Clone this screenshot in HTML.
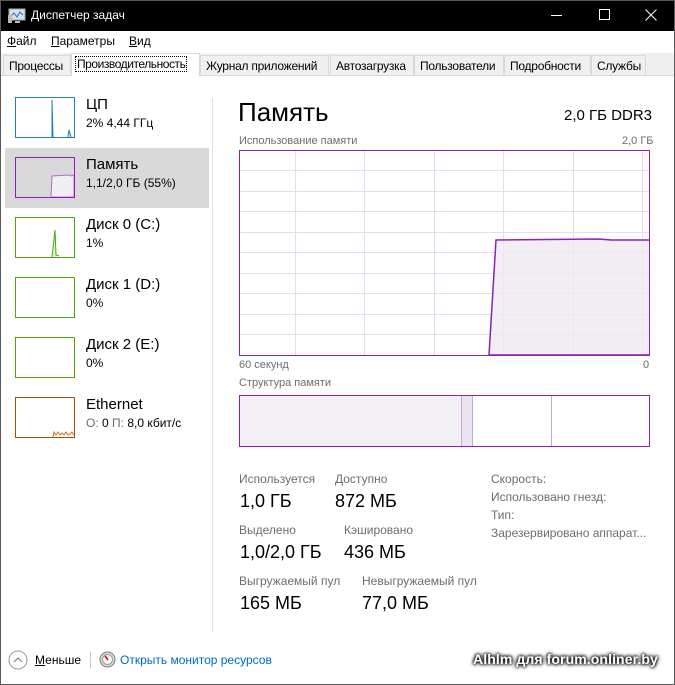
<!DOCTYPE html>
<html><head><meta charset="utf-8"><style>
*{margin:0;padding:0;box-sizing:border-box}
body{width:675px;height:685px;overflow:hidden;background:#fff;font-family:"Liberation Sans",sans-serif;font-size:12px;color:#000;position:relative}
.a{position:absolute;white-space:nowrap}
.title{left:0;top:0;width:675px;height:31px;background:#000;color:#fff}
.menu{top:34px;font-size:12px}
.tabs{left:0;top:53px;width:675px;height:23px;background:#f0f0f0;border-bottom:1px solid #d9d9d9}
.tab{position:absolute;top:2px;height:20px;background:#f0f0f0;border:1px solid #d9d9d9;border-bottom:none;font-size:12px;padding:3px 0 0 5px;letter-spacing:-0.25px;overflow:hidden}
.thumb{position:absolute;left:15px;width:60px;height:41px;border:1px solid}
.ln{font-size:15px}
.sm{font-size:12px}
.g{color:#6d6d6d;font-size:11px}
.lab{color:#6d6d6d;font-size:12px}
.val{font-size:18px}
</style></head><body>
<div class="a" style="left:0;top:0;width:675px;height:685px;border:1px solid #5a5a5a;z-index:5;pointer-events:none"></div>
<div class="a title">
<svg class="a" style="left:8px;top:8px" width="18" height="16" viewBox="0 0 18 16"><rect x="1" y="1" width="16" height="11" fill="#cfe3f3" stroke="#aaa"/><path d="M3 8 L6 5 L9 9 L12 4 L15 7" stroke="#2a6cb0" fill="none"/><rect x="0" y="7" width="4" height="8" fill="#bbb"/><rect x="7" y="13" width="5" height="2" fill="#bbb"/></svg>
<div class="a" style="left:31px;top:8px;font-size:12px">Диспетчер задач</div>
<div class="a" style="left:551px;top:15px;width:11px;height:1px;background:#fff"></div>
<div class="a" style="left:599px;top:9px;width:11px;height:11px;border:1px solid #fff"></div>
<svg class="a" style="left:645px;top:9px" width="12" height="12"><path d="M0.5 0.5L11.5 11.5M11.5 0.5L0.5 11.5" stroke="#fff"/></svg>
</div>
<div class="a menu" style="left:7px"><u>Ф</u>айл</div>
<div class="a menu" style="left:51px"><u>П</u>араметры</div>
<div class="a menu" style="left:129px"><u>В</u>ид</div>
<div class="a tabs">
<div class="tab" style="left:3px;width:68px">Процессы</div>
<div class="tab" style="left:71px;width:129px;top:0;height:23px;background:#fff;padding-top:3px;padding-left:4px;letter-spacing:-0.45px"><span style="outline:1px dotted #000;padding:0 1px">Производительность</span></div>
<div class="tab" style="left:200px;width:129px">Журнал приложений</div>
<div class="tab" style="left:330px;width:84px">Автозагрузка</div>
<div class="tab" style="left:414px;width:90px">Пользователи</div>
<div class="tab" style="left:504px;width:87px">Подробности</div>
<div class="tab" style="left:591px;width:55px">Службы</div>
</div>

<div class="a" style="left:5px;top:148px;width:204px;height:60px;background:#d9d9d9"></div>
<div class="a" style="left:212px;top:98px;width:1px;height:534px;background:#e3e3e3"></div>

<div class="thumb" style="top:97px;border-color:#1e7ebe"><svg width="58" height="39"><path d="M36 39 L36 2 L37 39 M52 39 L53 32 L55 39" stroke="#1e7ebe" fill="#d6e8f5"/></svg></div>
<div class="a ln" style="left:86px;top:96px">ЦП</div>
<div class="a sm" style="left:86px;top:116px">2% 4,44 ГГц</div>

<div class="thumb" style="top:157px;border-color:#8b21b8"><svg width="58" height="39"><path d="M35 39 L36 18 L53 17 L55 18 L58 17 L58 39Z" fill="#f1eef4" stroke="#b36ad0"/></svg></div>
<div class="a ln" style="left:86px;top:156px">Память</div>
<div class="a sm" style="left:86px;top:176px">1,1/2,0 ГБ (55%)</div>

<div class="thumb" style="top:217px;border-color:#4da60c"><svg width="58" height="39"><path d="M36 39 L39 12 L40 37 L43 38" stroke="#4da60c" fill="#e0f0d4"/></svg></div>
<div class="a ln" style="left:86px;top:216px">Диск 0 (C:)</div>
<div class="a sm" style="left:86px;top:236px">1%</div>

<div class="thumb" style="top:277px;border-color:#4da60c"></div>
<div class="a ln" style="left:86px;top:276px">Диск 1 (D:)</div>
<div class="a sm" style="left:86px;top:296px">0%</div>

<div class="thumb" style="top:337px;border-color:#4da60c"></div>
<div class="a ln" style="left:86px;top:336px">Диск 2 (E:)</div>
<div class="a sm" style="left:86px;top:356px">0%</div>

<div class="thumb" style="top:397px;border-color:#a74f01"><svg width="58" height="39"><path d="M37 39 L38 34 L40 37 L42 34 L44 37 L46 35 L48 37 L50 34 L52 37 L54 36 L56 34 L58 37" stroke="#c27030" fill="none"/></svg></div>
<div class="a ln" style="left:86px;top:396px">Ethernet</div>
<div class="a sm" style="left:86px;top:416px"><span style="color:#6d6d6d">О:</span> 0 <span style="color:#6d6d6d">П:</span> 8,0 кбит/с</div>

<div class="a" style="left:238px;top:97px;font-size:26px">Память</div>
<div class="a" style="left:564px;top:107px;font-size:15px">2,0 ГБ DDR3</div>
<div class="a g" style="left:239px;top:135px">Использование памяти</div>
<div class="a g" style="left:622px;top:135px">2,0 ГБ</div>
<svg class="a" style="left:239px;top:150px" width="411" height="206">
<g stroke="#ead9f0" stroke-width="1">
<path d="M0 20.5H411M0 41.5H411M0 61.5H411M0 82.5H411M0 102.5H411M0 123.5H411M0 143.5H411M0 164.5H411M0 184.5H411"/>
<path d="M56.5 0V206M125.5 0V206M195.5 0V206M264.5 0V206M334.5 0V206M403.5 0V206"/>
</g>
<path d="M250 205 L257 90 L360 89 L372 90 L411 90 L411 205Z" fill="#eeebf0" fill-opacity="0.8" stroke="#8b21b8" stroke-width="1.5"/>
<rect x="0.5" y="0.5" width="410" height="205" fill="none" stroke="#8b21b8"/>
</svg>
<div class="a g" style="left:239px;top:359px">60 секунд</div>
<div class="a g" style="left:643px;top:359px">0</div>
<div class="a g" style="left:239px;top:377px">Структура памяти</div>
<div class="a" style="left:239px;top:395px;width:411px;height:52px;border:1px solid #8b21b8;background:#fff">
<div class="a" style="left:0;top:0;width:222px;height:50px;background:#f2f0f4;border-right:1px solid #c9a6d8"></div>
<div class="a" style="left:222px;top:0;width:11px;height:50px;background:#ece3f1;border-right:1px solid #c9a6d8"></div>
<div class="a" style="left:311px;top:0;width:1px;height:50px;background:#c9a6d8"></div>
</div>

<div class="a lab" style="left:239px;top:472px">Используется</div>
<div class="a val" style="left:240px;top:491px">1,0 ГБ</div>
<div class="a lab" style="left:335px;top:472px">Доступно</div>
<div class="a val" style="left:335px;top:491px">872 МБ</div>
<div class="a lab" style="left:239px;top:523px">Выделено</div>
<div class="a val" style="left:240px;top:542px">1,0/2,0 ГБ</div>
<div class="a lab" style="left:344px;top:523px">Кэшировано</div>
<div class="a val" style="left:344px;top:542px">436 МБ</div>
<div class="a lab" style="left:239px;top:574px">Выгружаемый пул</div>
<div class="a val" style="left:240px;top:593px">165 МБ</div>
<div class="a lab" style="left:362px;top:574px">Невыгружаемый пул</div>
<div class="a val" style="left:362px;top:593px">77,0 МБ</div>
<div class="a lab" style="left:491px;top:472px">Скорость:</div>
<div class="a lab" style="left:491px;top:490px">Использовано гнезд:</div>
<div class="a lab" style="left:491px;top:508px">Тип:</div>
<div class="a lab" style="left:491px;top:526px">Зарезервировано аппарат...</div>

<svg class="a" style="left:8px;top:650px" width="20" height="20"><circle cx="10" cy="10" r="9" fill="none" stroke="#999"/><path d="M6 12 L10 8 L14 12" fill="none" stroke="#777"/></svg>
<div class="a" style="left:35px;top:653px"><u>М</u>еньше</div>
<div class="a" style="left:90px;top:652px;width:1px;height:16px;background:#ccc"></div>
<svg class="a" style="left:99px;top:651px" width="17" height="17"><circle cx="8.5" cy="8.5" r="7.5" fill="#ddd" stroke="#777"/><circle cx="8.5" cy="8.5" r="5" fill="#fff" stroke="#999"/><path d="M6 5 L9 9" stroke="#c00" stroke-width="1.5"/></svg>
<div class="a" style="left:120px;top:653px;color:#0066cc">Открыть монитор ресурсов</div>
<div class="a" style="left:473px;top:651px;color:#fff;font-weight:bold;font-size:14px;letter-spacing:0.1px;text-shadow:0 0 3px #000,0 0 3px #000,0 0 5px #000">Alhlm для forum.onliner.by</div>
</body></html>
